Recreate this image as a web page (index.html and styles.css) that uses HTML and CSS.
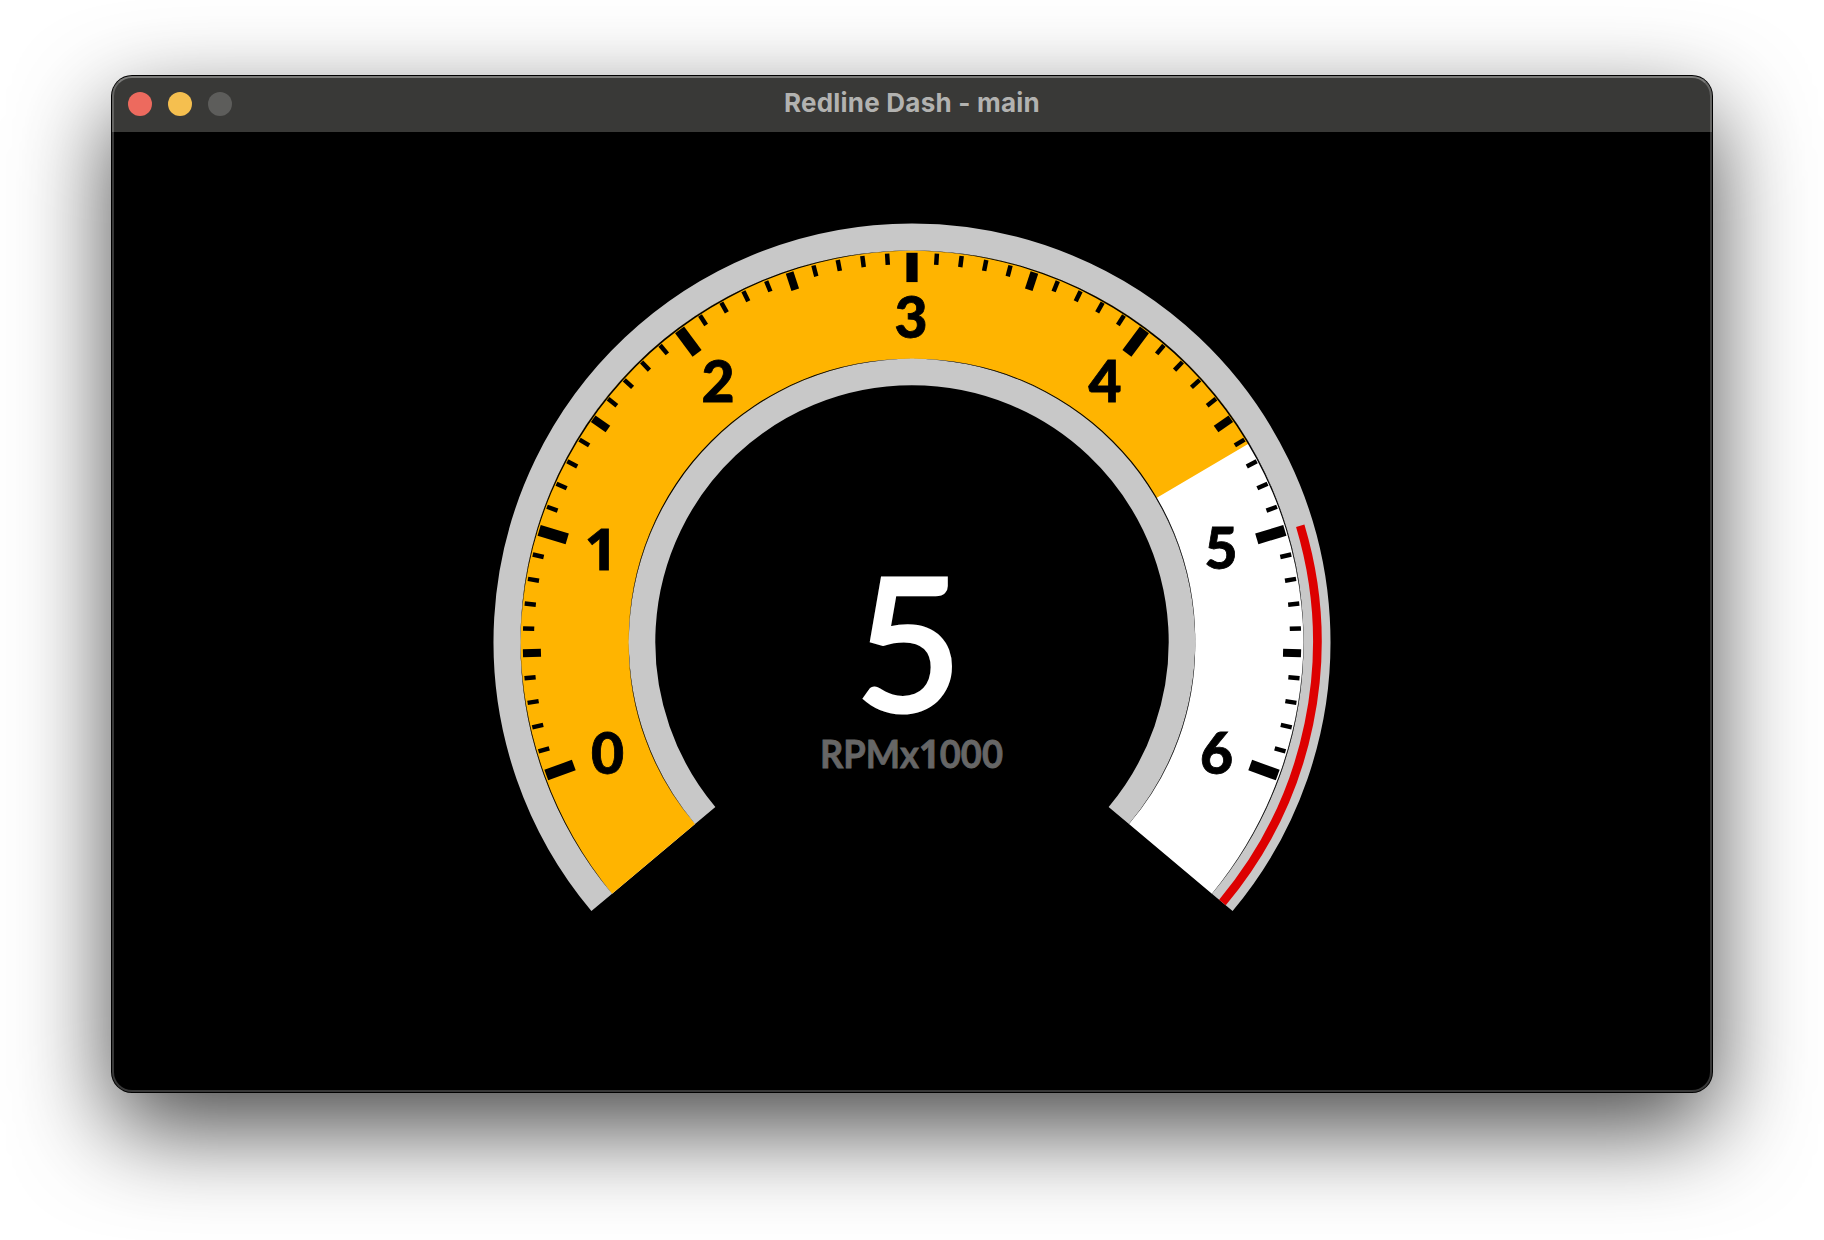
FILE: index.html
```html
<!DOCTYPE html>
<html lang="en">
<head>
<meta charset="utf-8">
<title>Redline Dash - main</title>
<link rel="stylesheet" href="styles.css">
</head>
<body>
<main class="window">
  <header class="titlebar">
    <div class="controls"><span class="dot close"></span><span class="dot minimize"></span><span class="dot zoom"></span></div>
    <h1 class="title">Redline Dash - main</h1>
    <div class="spacer"></div>
  </header>
  <section class="dash">
    <svg class="gauge" viewBox="-800 -510 1600 960" role="img" aria-label="Tachometer">
      <g id="dial"></g>
      <g class="labels">
        <text x="-304.5" y="131.5">0</text>
        <text class="one" x="-311" y="-72.5">1</text>
        <text x="-194" y="-240.5">2</text>
        <text x="-1" y="-304">3</text>
        <text x="193" y="-240.5">4</text>
        <text x="309" y="-73.5">5</text>
        <text x="304.5" y="131.5">6</text>
      </g>
      <text class="value" x="-3.5" y="70">5</text>
      <text class="unit" x="-92" y="126" textLength="183" lengthAdjust="spacingAndGlyphs">RPMx<tspan class="one">1</tspan>000</text>
    </svg>
  </section>
</main>
<script src="gauge.js"></script>
</body>
</html>
```

FILE: styles.css
```css
* { box-sizing: border-box; }
body {
  margin: 0;
  width: 1824px;
  height: 1240px;
  padding: 76px 112px 148px;
  background: #fff;
  overflow: hidden;
  font-family: Inter, "Liberation Sans", sans-serif;
}
.window {
  position: relative;
  display: flex;
  flex-direction: column;
  height: 1016px;
  border-radius: 20px;
  background: #000;
  box-shadow: 0 0 0 1px #000, 0 36px 96px rgba(0, 0, 0, .72);
}
.window::after {
  content: "";
  position: absolute;
  inset: 0;
  border-radius: 20px;
  border: 2px solid rgba(255, 255, 255, .22);
  border-top-color: rgba(255, 255, 255, .33);
  pointer-events: none;
}
.titlebar {
  display: grid;
  grid-template-columns: 1fr auto 1fr;
  align-items: center;
  height: 56px;
  padding: 0 16px;
  border-radius: 20px 20px 0 0;
  background: #393937;
}
.controls { display: flex; gap: 16px; }
.dot { width: 24px; height: 24px; border-radius: 50%; }
.close { background: #ed6a5e; }
.minimize { background: #f5bf4f; }
.zoom { background: #5d5d5b; }
.title {
  margin: 0;
  font-size: 26px;
  line-height: 32px;
  font-weight: 700;
  letter-spacing: .22px;
  padding-bottom: 3px;
  color: #b2b2b0;
}
.dash { height: 960px; }
.gauge { display: block; width: 1600px; height: 960px; }
.rim { fill: none; stroke: #c8c8c8; }
.redline { fill: none; stroke: #dd0000; }
.band { fill: none; stroke: #fff; }
.band.filled { stroke: #ffb400; }
.tick { stroke: #000; }
.labels { font: 900 57px Lato, sans-serif; text-anchor: middle; stroke: #000; stroke-width: .8px; }
.labels .one { font-family: "Open Sans", sans-serif; font-weight: 700; font-size: 58px; }
.value { font: 500 186px Lato, sans-serif; fill: #fff; stroke: #fff; stroke-width: 3px; text-anchor: middle; }
.unit { font: 700 39px Lato, sans-serif; fill: #666; stroke: #666; stroke-width: .8px; }
.unit .one { font-family: "Open Sans", sans-serif; }
```

FILE: gauge.js
```js
const dial = document.getElementById('dial');
const START = 140, END = 400, ZERO = 160, STEP = 11 / 3;

function point(r, deg) {
  const a = deg * Math.PI / 180;
  return (r * Math.cos(a)).toFixed(2) + ' ' + (r * Math.sin(a)).toFixed(2);
}
function add(d, cls, width) {
  const p = document.createElementNS('http://www.w3.org/2000/svg', 'path');
  p.setAttribute('d', d);
  if (cls) p.setAttribute('class', cls);
  if (width) p.setAttribute('stroke-width', width);
  dial.appendChild(p);
}
function arc(inner, outer, from, to, cls) {
  const r = (inner + outer) / 2;
  add(`M${point(r, from)}A${r} ${r} 0 ${to - from > 180 ? 1 : 0} 1 ${point(r, to)}`, cls, outer - inner);
}
// thin dark seam between a band edge and its rim, widest mid-segment
function seam(r, back, from, to) {
  add(`M${point(r, from)}A${r} ${r} 0 0 1 ${point(r, to)}A${back} ${back} 0 0 0 ${point(r, from)}Z`);
}

arc(283.2, 391.5, START, END, 'band');
arc(283.2, 391.5, START, 329.5, 'band filled');
arc(391.5, 418.5, START, END, 'rim');
arc(256.7, 283.2, START, END, 'rim');
[[140, 180, 14], [180, 270, 4], [270, 360, 4], [360, 400, 14]].forEach(([a, b, k]) => {
  seam(391.5, 391.5 + k, a, b);
  seam(283.2, 283.2 - k * 0.7, a, b);
});
arc(400.9, 409.6, 360 - 50 / 3, END, 'redline');
for (let i = 0; i <= 60; i++) {
  const deg = ZERO + i * STEP;
  const [len, w] = i % 10 === 0 ? [29.3, 11.2] : i % 5 === 0 ? [18, 8] : [11.2, 4.5];
  add(`M${point(389.2, deg)}L${point(389.2 - len, deg)}`, 'tick', w);
}
```
